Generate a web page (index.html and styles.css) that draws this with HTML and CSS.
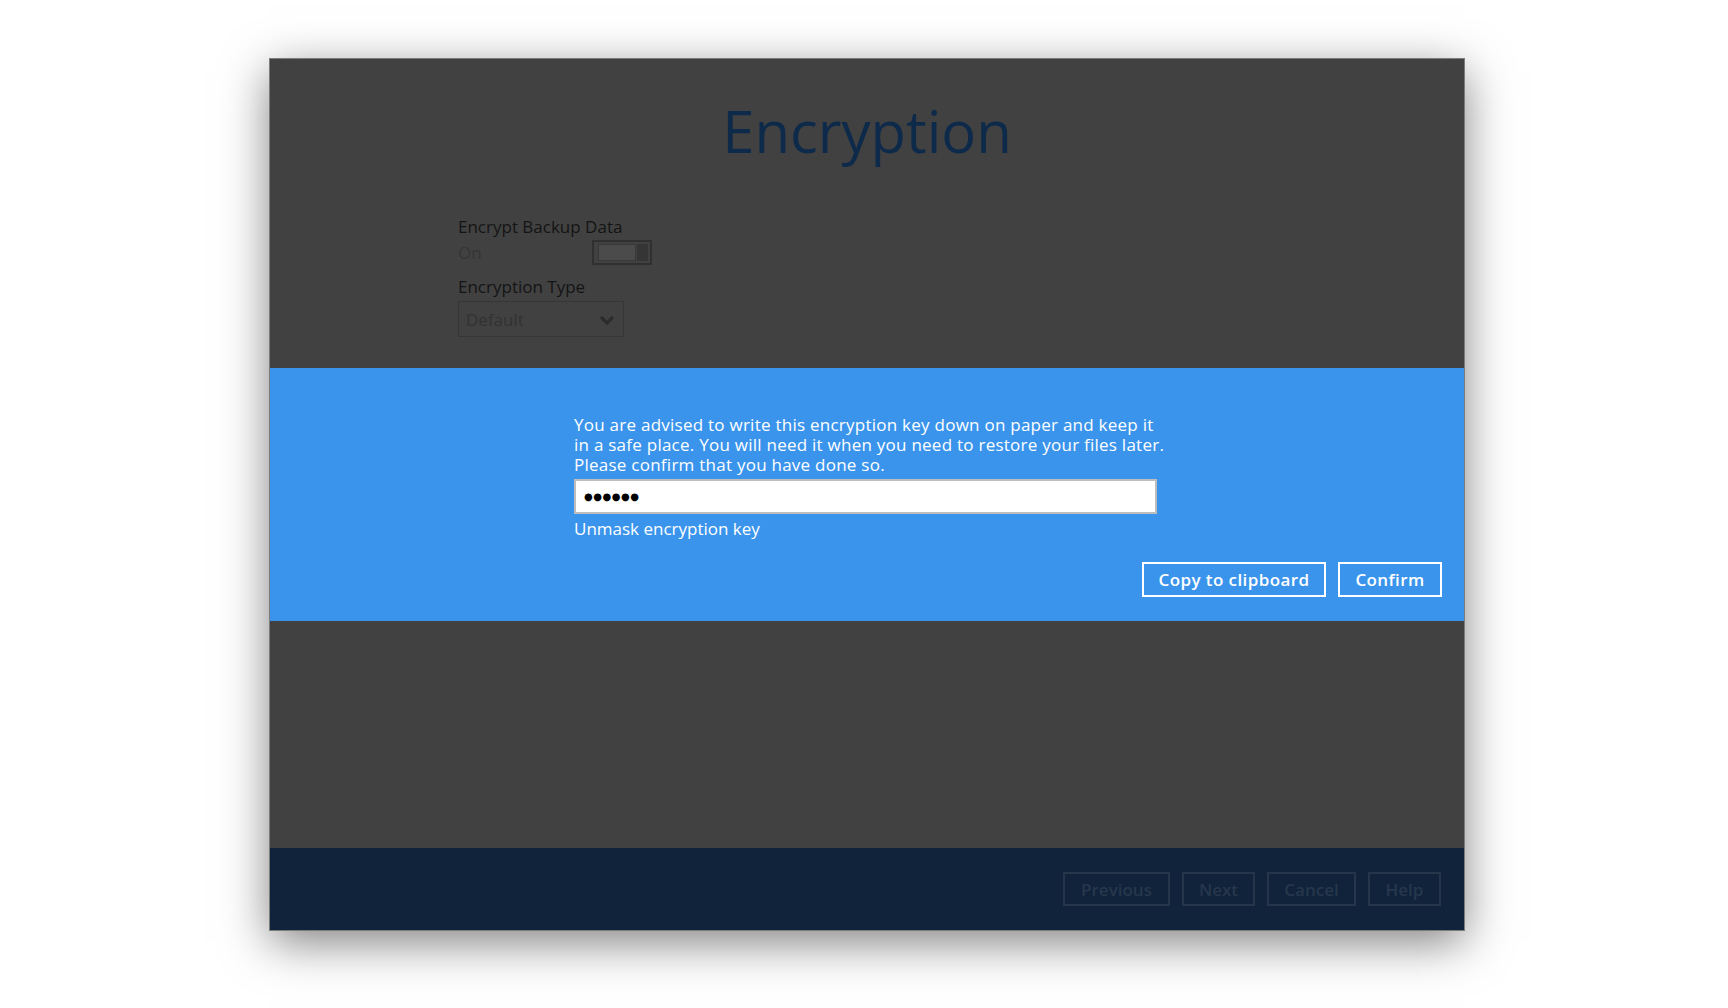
FILE: index.html
```html
<!DOCTYPE html>
<html lang="en">
  <head>
    <meta charset="UTF-8" />
    <meta name="viewport" content="width=device-width, initial-scale=1.0" />
    <title>Encryption</title>
    <link rel="stylesheet" href="styles.css">
  </head>
  <body>
    <div class="window">
      <section class="top">
        <h1 class="title">Encryption</h1>
        <div class="settings">
          <div class="field-label">Encrypt Backup Data</div>
          <div class="switch-row">
            <span class="switch-text">On</span>
            <span class="switch">
              <span class="switch-track"></span>
              <span class="switch-knob"></span>
            </span>
          </div>
          <div class="field-label type-label">Encryption Type</div>
          <div class="select">
            <span>Default</span>
            <svg class="chevron" width="14" height="10" viewBox="0 0 14 10">
              <path d="M1 2 L7 8 L13 2" fill="none" stroke="#2c2c2c" stroke-width="3.2" />
            </svg>
          </div>
        </div>
      </section>

      <section class="notice">
        <div class="notice-body">
          <p class="advice">
            You are advised to write this encryption key down on paper and keep it<br>
            in a safe place. You will need it when you need to restore your files later.<br>
            Please confirm that you have done so.
          </p>
          <div class="key-input">&#9679;&#9679;&#9679;&#9679;&#9679;&#9679;</div>
          <div class="unmask">Unmask encryption key</div>
        </div>
        <div class="notice-actions">
          <button class="outline-button">Copy to clipboard</button>
          <button class="outline-button">Confirm</button>
        </div>
      </section>

      <section class="middle"></section>

      <footer class="wizard-nav">
        <button class="nav-button">Previous</button>
        <button class="nav-button">Next</button>
        <button class="nav-button">Cancel</button>
        <button class="nav-button">Help</button>
      </footer>
    </div>
  </body>
</html>
```

FILE: styles.css
```css
body {
  font-family: "Open Sans", "DejaVu Sans", sans-serif;
  margin: 0;
  padding: 0;
  background-color: #ffffff;
  height: 1008px;
  overflow: hidden;
}

.window {
  margin: 59px 0 0 270px;
  width: 1194px;
  height: 871px;
  display: flex;
  flex-direction: column;
  background-color: #414141;
  box-shadow: 0 0 0 1px #7c7c7c, 0 12px 44px rgba(0, 0, 0, 0.5);
}

.top {
  height: 309px;
  box-sizing: border-box;
  padding-top: 33px;
}

.title {
  margin: 0;
  text-align: center;
  font-size: 58px;
  font-weight: 400;
  line-height: 78px;
  color: #0e2a4b;
}

.settings {
  margin: 45px 0 0 188px;
}

.field-label {
  font-size: 17px;
  line-height: 23px;
  color: #141414;
}

.switch-row {
  display: flex;
  align-items: center;
  margin-top: 2px;
  height: 25px;
}

.switch-text {
  width: 134px;
  font-size: 17px;
  color: #353535;
}

.switch {
  width: 60px;
  height: 25px;
  box-sizing: border-box;
  border: 2px solid #303030;
  display: flex;
  padding: 2px 2px 2px 4px;
  gap: 1px;
}

.switch-track {
  flex: 1;
  background-color: #4b4b4b;
  border: 1px solid #383838;
}

.switch-knob {
  width: 11px;
  background-color: #353535;
}

.type-label {
  margin-top: 10px;
}

.select {
  margin-top: 3px;
  width: 166px;
  height: 36px;
  box-sizing: border-box;
  border: 1px solid #363636;
  display: flex;
  align-items: center;
  justify-content: space-between;
  padding: 0 9px 0 7px;
  font-size: 17px;
  color: #323232;
}

.chevron {
  margin-top: 2px;
}

.notice {
  height: 253px;
  box-sizing: border-box;
  background-color: #3a94ec;
  padding: 47px 22px 0 304px;
}

.notice-body {
  width: 583px;
}

.advice {
  margin: 0;
  font-size: 17px;
  line-height: 20px;
  letter-spacing: 0.25px;
  white-space: nowrap;
  color: #ffffff;
}

.key-input {
  margin-top: 4px;
  height: 35px;
  box-sizing: border-box;
  background-color: #ffffff;
  border: 2px solid #bdbdbd;
  padding: 0 8px;
  font-size: 10px;
  line-height: 31px;
  letter-spacing: 0.5px;
  color: #000000;
}

.unmask {
  margin-top: 5px;
  font-size: 17px;
  line-height: 20px;
  color: #ffffff;
}

.notice-actions {
  display: flex;
  justify-content: flex-end;
  gap: 12px;
  margin-top: 23px;
}

.outline-button {
  font-family: inherit;
  height: 35px;
  padding: 0;
  background-color: transparent;
  border: 2px solid #ffffff;
  color: #ffffff;
  font-size: 17px;
  font-weight: 600;
  letter-spacing: 0.4px;
}

.outline-button:first-child {
  width: 184px;
}

.outline-button:last-child {
  width: 104px;
}

.middle {
  flex: 1;
}

.wizard-nav {
  height: 82px;
  background-color: #10233b;
  display: flex;
  justify-content: flex-end;
  align-items: center;
  gap: 12px;
  padding-right: 23px;
}

.nav-button {
  font-family: inherit;
  height: 34px;
  background-color: transparent;
  border: 2px solid #25354a;
  color: #26374b;
  font-size: 17px;
  font-weight: 600;
  padding: 0;
}

.nav-button:nth-child(1) {
  width: 107px;
}

.nav-button:nth-child(2) {
  width: 73px;
}

.nav-button:nth-child(3) {
  width: 89px;
}

.nav-button:nth-child(4) {
  width: 73px;
}
```
